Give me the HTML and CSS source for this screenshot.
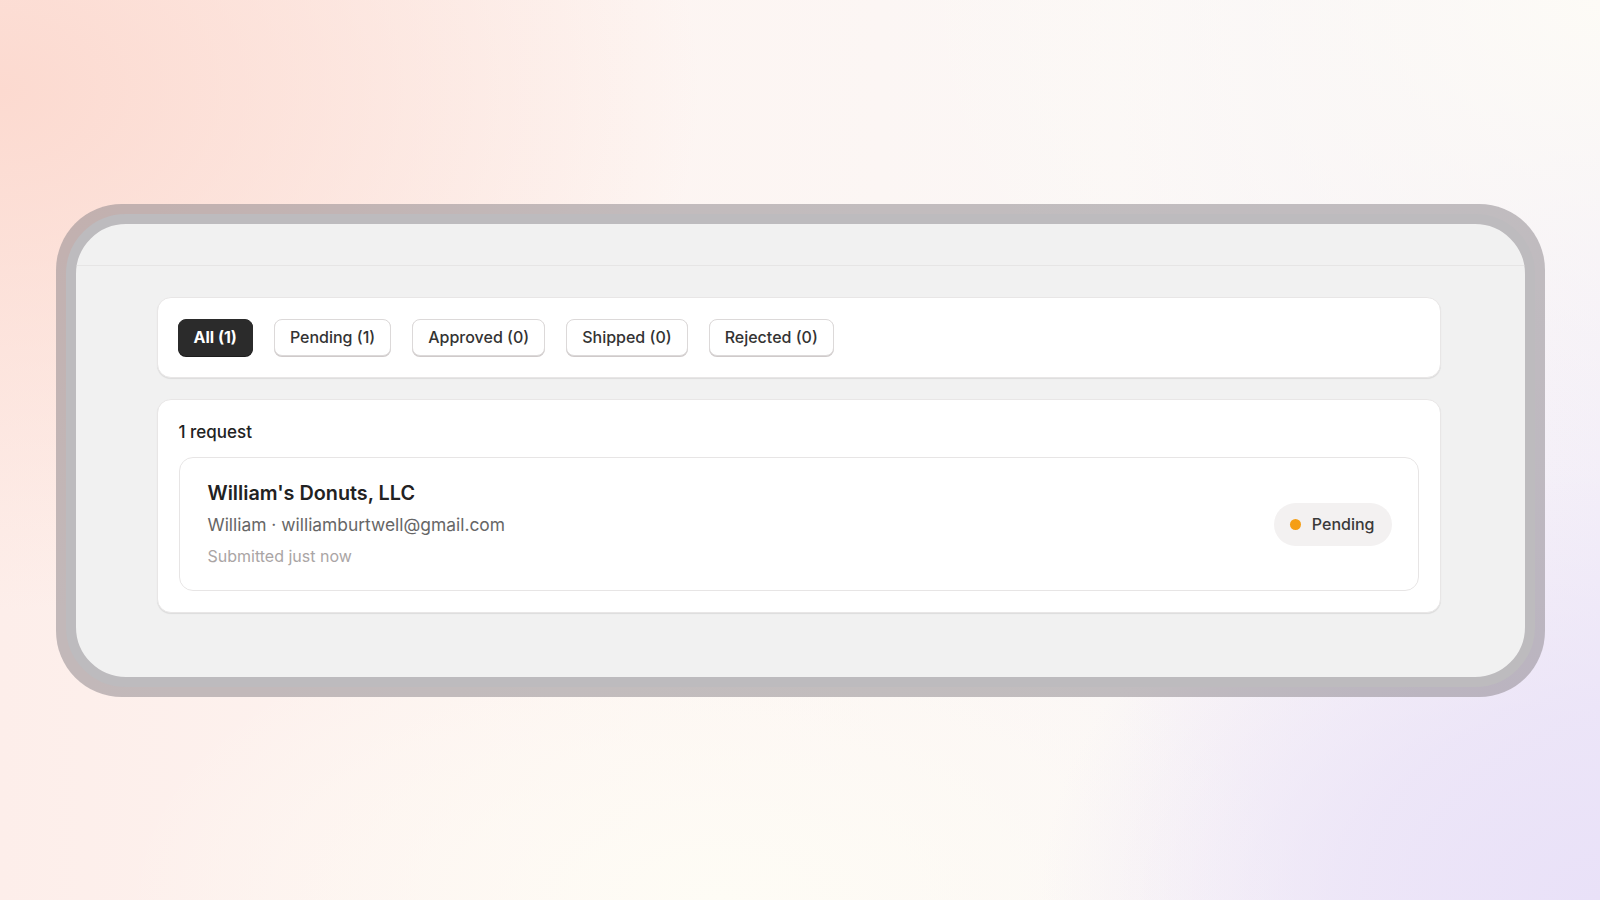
FILE: index.html
```html
<!DOCTYPE html>
<html lang="en">
<head>
<meta charset="utf-8">
<title>Requests</title>
<link rel="stylesheet" href="styles.css">
</head>
<body>
<div class="stage">
  <div class="device">
    <div class="screen">
      <div class="screen-header"></div>
      <div class="screen-body">
        <div class="card filter-card">
          <button class="pill active">All (1)</button>
          <button class="pill">Pending (1)</button>
          <button class="pill">Approved (0)</button>
          <button class="pill">Shipped (0)</button>
          <button class="pill">Rejected (0)</button>
        </div>
        <div class="card list-card">
          <div class="count">1 request</div>
          <div class="request">
            <div class="request-info">
              <div class="request-title">William's Donuts, LLC</div>
              <div class="request-contact">William · williamburtwell@gmail.com</div>
              <div class="request-time">Submitted just now</div>
            </div>
            <div class="status">
              <span class="status-dot"></span>
              <span class="status-label">Pending</span>
            </div>
          </div>
        </div>
      </div>
    </div>
  </div>
</div>
</body>
</html>
```

FILE: styles.css
```css
* { box-sizing: border-box; }

html, body {
  margin: 0;
  padding: 0;
  height: 100%;
}

body {
  font-family: Inter, "Noto Sans", "Liberation Sans", sans-serif;
  color: #222;
  background-color: #fcf6f4;
  background-image:
    radial-gradient(ellipse 700px 520px at 0% 10%, #fcdad0 0%, rgba(252, 218, 208, 0.6) 40%, rgba(252, 218, 208, 0) 100%),
    radial-gradient(ellipse 700px 500px at 100% 0%, #fdfbf6 0%, rgba(253, 251, 246, 0) 100%),
    radial-gradient(ellipse 560px 420px at 100% 100%, #e9e1f8 0%, rgba(233, 225, 248, 0.7) 45%, rgba(233, 225, 248, 0) 100%),
    radial-gradient(ellipse 600px 320px at 45% 100%, #fefcf5 0%, rgba(254, 252, 245, 0) 100%),
    linear-gradient(90deg, #fdeeea 0%, #fdf5f2 40%, #fbf7f6 70%, #f3eef8 100%);
  overflow: hidden;
}

.stage {
  width: 1600px;
  height: 900px;
  display: flex;
  align-items: center;
  justify-content: center;
}

.device {
  width: 1489px;
  height: 493px;
  padding: 10px;
  border-radius: 66px;
  background: rgba(135, 130, 135, 0.5);
}

.screen {
  height: 100%;
  border: 10px solid #bdbbbe;
  border-radius: 60px;
  background: #f1f1f1;
  overflow: hidden;
}

.screen-header {
  height: 42px;
  border-bottom: 1px solid #e6e5e5;
}

.screen-body {
  padding: 31px 84px 0 81px;
  display: flex;
  flex-direction: column;
  gap: 21px;
}

.card {
  background: #fff;
  border: 1px solid #e8e6e6;
  border-radius: 14px;
  box-shadow: 0 1px 1px rgba(0, 0, 0, 0.09);
}

.filter-card {
  display: flex;
  align-items: center;
  gap: 21px;
  padding: 21px 20px 21px 20px;
}

.pill {
  font-family: inherit;
  font-size: 16px;
  font-weight: 500;
  line-height: 20px;
  color: #333;
  background: #fff;
  border: 1px solid #dcd9d9;
  border-radius: 8px;
  padding: 7px 15px 8px;
  box-shadow: 0 1px 0 #cfcaca;
  cursor: pointer;
}

.pill.active {
  background: #2b2b2b;
  border-color: #2b2b2b;
  color: #fff;
  font-weight: 700;
  box-shadow: 0 1px 0 #1c1c1c;
}

.list-card {
  padding: 20px 21px 21px 21px;
}

.count {
  font-size: 17px;
  font-weight: 500;
  line-height: 24px;
  color: #222;
  margin-bottom: 13px;
}

.request {
  display: flex;
  align-items: center;
  justify-content: space-between;
  border: 1px solid #e7e5e5;
  border-radius: 14px;
  padding: 22px 26px 23px 28px;
}

.request-title {
  font-size: 19.8px;
  font-weight: 600;
  line-height: 26px;
  color: #222;
  margin-bottom: 7px;
}

.request-contact {
  font-size: 17.4px;
  line-height: 24px;
  color: #666;
  margin-bottom: 8px;
}

.request-time {
  font-size: 16px;
  line-height: 22px;
  color: #aaa5a5;
}

.status {
  display: flex;
  align-items: center;
  gap: 11px;
  height: 43px;
  padding: 0 17px 0 16px;
  background: #f3f1f1;
  border-radius: 999px;
  margin-top: 2px;
}

.status-dot {
  width: 11px;
  height: 11px;
  border-radius: 50%;
  background: #f59e14;
}

.status-label {
  font-size: 16px;
  font-weight: 500;
  color: #3a3a3a;
}
```
